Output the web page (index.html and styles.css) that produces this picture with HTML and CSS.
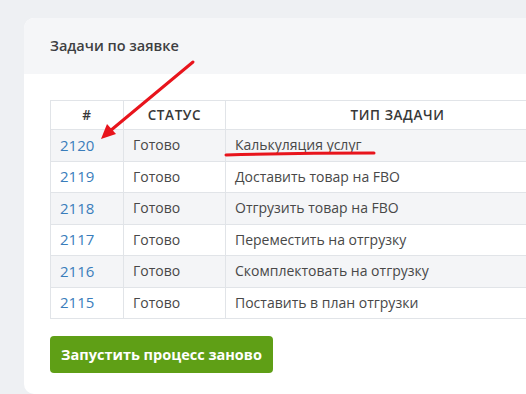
FILE: index.html
```html
<!DOCTYPE html>
<html>

<head>
  <meta charset="UTF-8">
  <title>Задачи по заявке</title>
  <link rel="stylesheet" href="styles.css">
</head>

<body>
  <div class="card">
    <div class="card-header">Задачи по заявке</div>
    <div class="card-body">
      <table class="tasks">
        <thead>
          <tr>
            <th class="col-id">#</th>
            <th class="col-status">Статус</th>
            <th class="col-type">Тип задачи</th>
          </tr>
        </thead>
        <tbody>
          <tr>
            <td><a href="#">2120</a></td>
            <td class="status">Готово</td>
            <td>Калькуляция услуг</td>
          </tr>
          <tr>
            <td><a href="#">2119</a></td>
            <td class="status">Готово</td>
            <td>Доставить товар на FBO</td>
          </tr>
          <tr>
            <td><a href="#">2118</a></td>
            <td class="status">Готово</td>
            <td>Отгрузить товар на FBO</td>
          </tr>
          <tr>
            <td><a href="#">2117</a></td>
            <td class="status">Готово</td>
            <td>Переместить на отгрузку</td>
          </tr>
          <tr>
            <td><a href="#">2116</a></td>
            <td class="status">Готово</td>
            <td>Скомплектовать на отгрузку</td>
          </tr>
          <tr>
            <td><a href="#">2115</a></td>
            <td class="status">Готово</td>
            <td>Поставить в план отгрузки</td>
          </tr>
        </tbody>
      </table>
      <button class="restart-btn">Запустить процесс заново</button>
    </div>
  </div>

  <svg class="marks" width="526" height="394" viewBox="0 0 526 394">
    <line x1="193" y1="62" x2="110" y2="131" stroke="#e8141c" stroke-width="3" stroke-linecap="round" />
    <polygon points="101,139 107,124 116,134" fill="#e8141c" />
    <path d="M226 155 Q300 153 374 153" stroke="#e8141c" stroke-width="3" fill="none" stroke-linecap="round" />
  </svg>
</body>

</html>
```

FILE: styles.css
```css
* {
  margin: 0;
  padding: 0;
  box-sizing: border-box;
}

html,
body {
  width: 526px;
  height: 394px;
  overflow: hidden;
}

body {
  background-color: #eef0f3;
  font-family: "Open Sans", Arial, sans-serif;
  color: #444;
  padding: 18px 0 0 24px;
  position: relative;
}

.card {
  width: 560px;
  background-color: #fff;
  border-radius: 10px;
  overflow: hidden;
}

.card-header {
  background-color: #f5f6f8;
  height: 56px;
  padding: 18px 26px 0;
  font-size: 14.5px;
  font-weight: 600;
  color: #3e3f42;
}

.card-body {
  padding: 26px 26px 21px;
}

.tasks {
  border-collapse: collapse;
  width: 520px;
  font-size: 14px;
}

.tasks th,
.tasks td {
  border: 1px solid #e1e4e8;
}

.tasks th {
  height: 29px;
  font-size: 13.5px;
  font-weight: 600;
  text-transform: uppercase;
  letter-spacing: 0.6px;
  color: #383838;
  line-height: 20px;
  padding: 0 8px;
  text-align: center;
}

.col-id {
  width: 73px;
}

.col-status {
  width: 102px;
}

.tasks td {
  height: 31.5px;
  padding: 0 9px;
  line-height: 20px;
  color: #484848;
}

.tasks tbody tr:nth-child(odd) td {
  background-color: #f4f5f7;
}

.tasks a {
  display: inline-block;
  line-height: 20px;
  color: #3a7dbb;
  text-decoration: none;
  font-size: 15px;
}

.restart-btn {
  display: block;
  margin-top: 17px;
  width: 223px;
  height: 37px;
  border: none;
  border-radius: 4px;
  background-color: #5f9f16;
  color: #fff;
  font-family: "Open Sans", Arial, sans-serif;
  font-size: 14.5px;
  font-weight: 700;
  cursor: pointer;
}

.marks {
  position: absolute;
  top: 0;
  left: 0;
}
```
